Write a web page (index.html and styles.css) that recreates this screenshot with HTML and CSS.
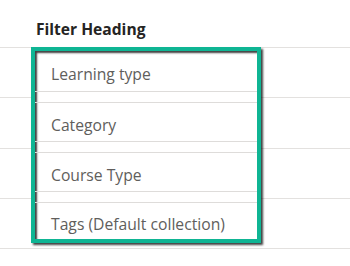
FILE: index.html
```html
<!DOCTYPE html>
<html>
<head>
<meta charset="utf-8">
<link rel="stylesheet" href="styles.css">
</head>
<body>
<div class="page">
  <div class="heading">Filter Heading</div>
  <div class="rows">
    <div class="row"></div>
    <div class="row"></div>
    <div class="row"></div>
    <div class="row"></div>
  </div>
  <div class="callout">
    <div class="item item-first"><span>Learning type</span></div>
    <div class="item"><span>Category</span></div>
    <div class="item item-third"><span>Course Type</span></div>
    <div class="item item-last"><span>Tags (Default collection)</span></div>
  </div>
</div>
</body>
</html>
```

FILE: styles.css
```css
html, body {
  margin: 0;
  padding: 0;
  background: #ffffff;
}
.page {
  position: relative;
  width: 350px;
  height: 266px;
  overflow: hidden;
  font-family: "Open Sans", "Noto Sans", sans-serif;
}
.heading {
  box-sizing: border-box;
  height: 47px;
  padding: 19px 0 0 36px;
  font-size: 15.6px;
  line-height: 20px;
  font-weight: 700;
  color: #252423;
}
.rows {
  border-top: 1px solid #e3e1df;
}
.row {
  height: 49px;
  border-bottom: 1px solid #e3e1df;
}
.row:nth-child(2) {
  height: 50px;
}
.callout {
  position: absolute;
  left: 31px;
  top: 47px;
  width: 230px;
  height: 196px;
  box-sizing: border-box;
  border: 4px solid #0fb594;
  background: #ffffff;
  box-shadow: 2px 2px 2px rgba(0, 0, 0, 0.75), inset 2px 2px 2px rgba(0, 0, 0, 0.75);
  display: flex;
  flex-direction: column;
  gap: 10px;
}
.item {
  box-sizing: border-box;
  height: 41px;
  padding: 6px 0 0 16px;
  border-top: 1px solid #dedcda;
  border-bottom: 1px solid #dedcda;
  display: flex;
  align-items: center;
  font-size: 15.7px;
  line-height: 20px;
  color: #605e5c;
}
.item-first {
  border-top: none;
}
.item-third {
  height: 40px;
}
.item-last {
  height: 37px;
  border-bottom: none;
}
```
